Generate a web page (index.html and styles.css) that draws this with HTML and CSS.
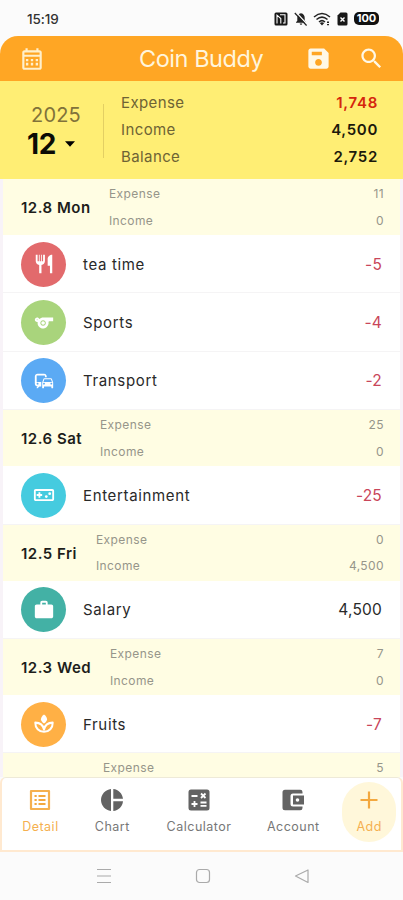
FILE: index.html
```
<!DOCTYPE html>
<html lang="en">
<head>
<meta charset="utf-8">
<title>Coin Buddy</title>
<link rel="stylesheet" href="styles.css">
</head>
<body>
<div class="phone">
  <div class="status">
    <span class="clock">15:19</span>
    <div class="status-icons">
      <svg width="14" height="14" viewBox="0 0 14 14"><rect x="0.500" y="0.500" width="13" height="13" rx="1.500" fill="#181818"/><path d="M3 11.500V3.200L6.800 6.500V11.500M6 2.800h5v8.200H9" fill="none" stroke="#fff" stroke-width="1.100"/></svg>
      <svg width="14" height="14" viewBox="0 0 14 14"><path d="M7 1.200c2.600.5 3.700 2.300 3.700 4.600v3l1.300 1.400v.5H2v-.5l1.300-1.400v-3C3.300 3.500 4.400 1.700 7 1.200zM5.700 11.500h2.600a1.300 1.300 0 0 1-2.600 0z" fill="#222"/><path d="M2.300.5l11.200 12.200" stroke="#fafafa" stroke-width="1.300"/><path d="M.8 1l11.800 12.500" stroke="#222" stroke-width="1.200"/></svg>
      <svg class="wifi" width="18" height="14" viewBox="0 0 18 14"><path d="M1 5Q9-2 17 5M3.500 7.500Q9 2.700 14.500 7.500M6 10Q9 7.300 12 10" fill="none" stroke="#222" stroke-width="1.500"/><path d="M6.800 11L9 13.500 11.200 11Q9 9.500 6.800 11zM14 9.500h2v1.500h-2zM14 12h2v1.300h-2z" fill="#222"/></svg>
      <svg width="11" height="14" viewBox="0 0 11 14"><path d="M3.500.5H9a1.500 1.500 0 0 1 1.500 1.500v10A1.500 1.500 0 0 1 9 13.500H2A1.500 1.500 0 0 1 .5 12V3.500z" fill="#181818"/><path d="M3.500 5.500l4 4m0-4l-4 4" stroke="#fff" stroke-width="1.400"/></svg>
      <span class="battery">100</span>
    </div>
  </div>

  <header class="appbar">
    <svg class="cal" width="26" height="26" viewBox="0 0 24 24"><path fill-rule="evenodd" d="M19 4h-1V2h-2v2H8V2H6v2H5c-1.110 0-1.990.9-1.990 2L3 20c0 1.100.89 2 2 2h14c1.100 0 2-.9 2-2V6c0-1.100-.9-2-2-2zm0 16H5V10h14v10zm0-12H5V6h14v2zM8.600 14H6.400v-2h2.200v2zm4.500 0h-2.200v-2h2.200v2zm4.500 0h-2.200v-2h2.200v2zm-9 4H6.400v-2.500h2.200v2.500zm4.500 0h-2.200v-2.500h2.200v2.500zm4.500 0h-2.200v-2.500h2.200v2.500z"/></svg>
    <h1>Coin Buddy</h1>
    <svg class="save" width="27" height="27" viewBox="0 0 24 24"><path d="M17 3H5c-1.110 0-2 .9-2 2v14c0 1.100.89 2 2 2h14c1.100 0 2-.9 2-2V7l-4-4zm-5 15.500c-1.660 0-3-1.340-3-3s1.340-3 3-3 3 1.340 3 3-1.340 3-3 3zm3-9.500H6V6h9v3z"/></svg>
    <svg class="search" width="27" height="27" viewBox="0 0 24 24"><path d="M15.500 14h-.79l-.28-.27C15.410 12.590 16 11.110 16 9.500 16 5.910 13.090 3 9.500 3S3 5.910 3 9.500 5.910 16 9.500 16c1.610 0 3.090-.59 4.230-1.570l.27.28v.79l5 4.990L20.490 19l-4.990-5zm-6 0C7.010 14 5 11.990 5 9.500S7.010 5 9.500 5 14 7.010 14 9.500 11.990 14 9.500 14z"/></svg>
  </header>

  <section class="summary">
    <div class="period">
      <div class="year">2025</div>
      <div class="month">12<svg width="12" height="6" viewBox="0 0 12 6"><path d="M1 .3h10L6 5.700z" fill="#000"/></svg></div>
    </div>
    <dl class="totals">
      <div><dt>Expense</dt><dd class="out">1,748</dd></div>
      <div><dt>Income</dt><dd>4,500</dd></div>
      <div><dt>Balance</dt><dd>2,752</dd></div>
    </dl>
  </section>

  <main class="list">
    <div class="day"><b class="mon">12.8 Mon</b><div class="sums"><p>Expense<span>11</span></p><p>Income<span>0</span></p></div></div>
    <div class="row"><i class="dot red"><svg viewBox="0 0 24 24"><path d="M11 9H9.600V2H8.700v7H7.300V2h-.9v7H5V2H3v7c0 2.120 1.660 3.840 3.750 3.970V22h2.500v-9.030C11.340 12.840 13 11.120 13 9V2h-2v7zm5-3v8h2.500v8H21V2c-2.760 0-5 2.240-5 4z"/></svg></i><span>tea time</span><em class="out">-5</em></div>
    <div class="row"><i class="dot green"><svg viewBox="0 0 24 24"><path fill-rule="evenodd" d="M11.230 6c-1.660 0-3.220.66-4.360 1.730C6.540 6.730 5.610 6 4.500 6 3.120 6 2 7.120 2 8.500S3.120 11 4.500 11c.21 0 .41-.03.61-.08-.05.25-.09.51-.1.78-.18 3.680 2.950 6.680 6.680 6.270 2.550-.28 4.680-2.260 5.190-4.770.15-.71.15-1.400.06-2.060-.09-.6.38-1.130.99-1.130H22V6H11.230zM4.500 9c-.28 0-.5-.22-.5-.5s.22-.5.5-.5.5.22.5.5-.22.5-.5.5zm6.500 6c-1.660 0-3-1.340-3-3s1.340-3 3-3 3 1.340 3 3-1.340 3-3 3z"/><circle cx="11" cy="12" r="2"/></svg></i><span>Sports</span><em class="out">-4</em></div>
    <div class="row"><i class="dot blue"><svg viewBox="0 0 24 24"><path fill-rule="evenodd" d="M12 4H5C3.340 4 2 5.340 2 7v8c0 1.660 1.340 3 3 3l-1 1v1h1l2-2.030L9 18v-5H4V6h9v2h2V7c0-1.660-1.340-3-3-3zM5 14c.55 0 1 .45 1 1s-.45 1-1 1-1-.45-1-1 .45-1 1-1zm15.570-4.340c-.14-.4-.52-.66-.97-.66h-7.190c-.46 0-.83.26-.98.66L10 13.770l.01 5.510c0 .38.31.72.69.72h.62c.38 0 .68-.38.68-.76V18h8v1.240c0 .38.31.76.69.76h.61c.38 0 .69-.34.69-.72l.01-1.370v-4.140l-1.430-4.110zM12.410 10h7.190l1.030 3h-9.250l1.030-3zM12 16c-.55 0-1-.45-1-1s.45-1 1-1 1 .45 1 1-.45 1-1 1zm8 0c-.55 0-1-.45-1-1s.45-1 1-1 1 .45 1 1-.45 1-1 1z"/></svg></i><span>Transport</span><em class="out">-2</em></div>
    <div class="day"><b class="sat">12.6 Sat</b><div class="sums"><p>Expense<span>25</span></p><p>Income<span>0</span></p></div></div>
    <div class="row"><i class="dot cyan"><svg viewBox="0 0 24 24"><path fill-rule="evenodd" d="M21 5.500H3c-1.100 0-2 .9-2 2v9c0 1.100.9 2 2 2h18c1.100 0 2-.9 2-2v-9c0-1.100-.9-2-2-2zm0 11H3v-9h18v9zM6 15h2v-2h2v-2H8V9H6v2H4v2h2z"/><circle cx="14.500" cy="13.700" r="1.500"/><circle cx="18.200" cy="10.500" r="1.500"/></svg></i><span>Entertainment</span><em class="out">-25</em></div>
    <div class="day"><b class="fri">12.5 Fri</b><div class="sums"><p>Expense<span>0</span></p><p>Income<span>4,500</span></p></div></div>
    <div class="row"><i class="dot teal"><svg viewBox="0 0 24 24"><path fill-rule="evenodd" d="M20 6h-4V4c0-1.110-.89-2-2-2h-4c-1.110 0-2 .89-2 2v2H4c-1.110 0-1.990.89-1.990 2L2 19c0 1.110.89 2 2 2h16c1.110 0 2-.89 2-2V8c0-1.110-.89-2-2-2zm-6 0h-4V4h4v2z"/></svg></i><span>Salary</span><em>4,500</em></div>
    <div class="day"><b class="wed">12.3 Wed</b><div class="sums"><p>Expense<span>7</span></p><p>Income<span>0</span></p></div></div>
    <div class="row"><i class="dot orange"><svg viewBox="0 0 24 24"><path d="M12 1.500c2 1.600 3.300 3.300 3.300 5.200S13.800 10 12 11.500C10.200 10 8.700 8.600 8.700 6.700S10 3.100 12 1.500z"/><path d="M2.500 10.500c5.500 0 8.500 2.800 9.500 7.500 1-4.700 4-7.500 9.500-7.500 0 6-3.800 10-9.500 10s-9.500-4-9.500-10z" fill="none" stroke="#fff" stroke-width="2.200" stroke-linejoin="round"/></svg></i><span>Fruits</span><em class="out">-7</em></div>
    <div class="day last"><div class="sums"><p>Expense<span>5</span></p></div></div>
  </main>

  <nav class="tabs">
    <a class="active"><svg viewBox="0 0 24 24"><path fill="none" stroke="currentColor" stroke-width="2.200" d="M3 3h18v18H3z" stroke-linejoin="round"/><path d="M6.500 7h2.200v2H6.500zM6.500 11h2.200v2H6.500zM6.500 15h2.200v2H6.500zM10.500 7h7v2h-7zM10.500 11h7v2h-7zM10.500 15h7v2h-7z"/></svg>Detail</a>
    <a class="chart"><svg viewBox="0 0 24 24"><path d="M11 1v22C5.500 22.500 1 17.700 1 12S5.500 1.500 11 1zm2.300 0v9.800H23C22.500 5.600 18.500 1.500 13.300 1zm0 12.200V23c5.200-.5 9.200-4.600 9.700-9.800z"/></svg>Chart</a>
    <a class="calc"><svg viewBox="0 0 24 24"><rect x="1.500" y="1.500" width="21" height="21" rx="2.500"/><path stroke="#fff" stroke-width="1.800" d="M4.500 8h6M14 5.500l4.500 4.500m0-4.500L14 10M4.500 16h6M7.500 13v6M13.500 14.500h6M13.500 17.800h6"/></svg>Calculator</a>
    <a class="account"><svg viewBox="0 0 24 24"><path fill-rule="evenodd" d="M21.500 18.500V20a2.300 2.300 0 0 1-2.300 2.300H4A2.500 2.500 0 0 1 1.500 19.800V4.200A2.500 2.500 0 0 1 4 1.700h15.200A2.300 2.300 0 0 1 21.500 4v1.500H12a2.500 2.500 0 0 0-2.500 2.500v8a2.500 2.500 0 0 0 2.500 2.500zM12 7.500h11v9H12zm4.500 2.700a1.800 1.800 0 1 0 0 3.600 1.800 1.800 0 0 0 0-3.600z"/></svg>Account</a>
    <a class="add active"><svg viewBox="0 0 24 24"><path d="M10.900 3.500h2.200v7.400h7.400v2.200h-7.400v7.400h-2.200v-7.400H3.500v-2.200h7.400z"/></svg>Add</a>
  </nav>

  <div class="system">
    <svg width="16" height="16" viewBox="0 0 16 16"><path d="M1 1.500h14M1 8h14M1 14.500h14"/></svg>
    <svg width="16" height="16" viewBox="0 0 16 16"><rect x="1.500" y="1.500" width="13" height="13" rx="3"/></svg>
    <svg width="16" height="16" viewBox="0 0 16 16"><path d="M14 2v12.500L1.500 8z" stroke-linejoin="round"/></svg>
  </div>
</div>
</body>
</html>
```
FILE: styles.css
```
* { box-sizing: border-box; margin: 0; padding: 0; }
body { background: #fbfbfb; font-family: Inter, "Liberation Sans", sans-serif; }
svg { display: block; flex: none; }
.phone { width: 403px; height: 900px; display: flex; flex-direction: column; overflow: hidden; }

.status { height: 36px; flex: none; display: flex; align-items: center; justify-content: space-between; padding: 1px 24px 0 27px; }
.clock { font-size: 13.500px; font-weight: 500; color: #333; letter-spacing: -0.1px; }
.status-icons { display: flex; align-items: center; gap: 6px; }
.wifi { margin-left: -1px; }
.battery { width: 25px; height: 13px; border-radius: 5px; background: #111; color: #fff; font-size: 11px; font-weight: 700; line-height: 13px; text-align: center; }

.appbar { height: 45px; flex: none; display: flex; align-items: center; background: #ffa624; border-radius: 18px 18px 0 0; padding: 0 18px 0 19px; fill: #fff8e6; }
.cal { fill: #fff0cc; }
.appbar h1 { margin-left: 94px; width: 126px; white-space: nowrap; font-size: 23.500px; font-weight: 400; color: #fff5dc; letter-spacing: -0.45px; line-height: 46px; }
.save { margin-left: 40px; }
.search { margin-left: auto; }

.summary { height: 98px; flex: none; display: flex; align-items: center; background: #ffee74; padding: 1px 25px 0 0; }
.period { width: 104px; height: 54px; border-right: 1px solid #e3cf63; padding-left: 27px; }
.year { font-size: 20px; line-height: 22px; color: #81723a; padding-left: 4px; letter-spacing: 0.2px; }
.month { display: flex; align-items: center; gap: 8px; font-size: 28px; font-weight: 700; line-height: 36px; letter-spacing: -0.3px; color: #0c0b05; }
.totals { flex: 1; padding-left: 17px; }
.totals div { display: flex; justify-content: space-between; line-height: 26.700px; }
.totals dt { font-size: 15px; color: #6e6335; letter-spacing: 0.4px; }
.totals dd { font-size: 15px; font-weight: 600; color: #1c190b; letter-spacing: 0.7px; }
.totals .out { color: #d5260d; }

.list { height: 598px; flex: none; overflow: hidden; background: #fff; border: solid #f8f3f8; border-width: 0 3px; }
.day { height: 56px; display: flex; background: #fffde3; padding: 0 16px 0 18px; }
.day b { font-size: 15px; font-weight: 600; line-height: 57px; color: #1d1d1b; letter-spacing: 0.5px; white-space: nowrap; }
.mon { width: 88px; }
.sat { width: 79px; }
.fri { width: 75px; }
.wed { width: 89px; }
.day.last { height: 25px; padding-left: 100px; }
.last .sums { padding-top: 1px; }
.last .sums p { line-height: 28px; height: 24px; }
.sums { flex: 1; padding-top: 2px; }
.sums p { display: flex; justify-content: space-between; font-size: 12px; line-height: 26.700px; color: #96958a; letter-spacing: 0.400px; }
.row { height: 58.400px; display: flex; align-items: center; padding: 1px 18px 0; border-bottom: 1px solid #f5f4f5; font-size: 15px; color: #292929; letter-spacing: 0.650px; }
.row em { margin-left: auto; font-style: normal; font-size: 15.500px; letter-spacing: 0.2px; }
.row em.out { color: #c9465a; }
.dot { width: 45px; height: 45px; border-radius: 50%; margin-right: 17px; display: flex; align-items: center; justify-content: center; }
.dot svg { width: 22px; height: 22px; fill: #fff; }
.red { background: #e26a6c; }
.green { background: #a9d47c; }
.blue { background: #5baaf4; }
.cyan { background: #45cbdf; }
.teal { background: #43b1a5; }
.orange { background: #ffb045; }

.tabs { height: 75px; flex: none; display: flex; background: #fff; border: 2px solid #ffe9d0; border-top: 1px solid #eeead8; border-radius: 6px 6px 0 0; padding: 4px 5px 0 19px; }
.tabs a { display: flex; flex-direction: column; align-items: center; padding-top: 6px; font-size: 12.500px; line-height: 16px; letter-spacing: 0.500px; color: #777; fill: #636363; white-space: nowrap; }
.tabs svg { width: 24px; height: 24px; margin-bottom: 7px; }
.tabs .active { width: 39px; color: #f5b04f; fill: #f3a83f; }
.tabs .chart { width: 37px; margin-left: 34px; }
.tabs .calc { width: 67px; margin-left: 35px; }
.tabs .account { width: 54px; margin-left: 34px; }
.tabs .add { width: 54px; height: 60px; margin-left: 22px; background: #fff7da; border-radius: 27px; }

.system { flex: 1; display: flex; justify-content: center; gap: 83px; padding: 16px 0 0 3px; fill: none; stroke: #aaa; stroke-width: 1.200; }
```
